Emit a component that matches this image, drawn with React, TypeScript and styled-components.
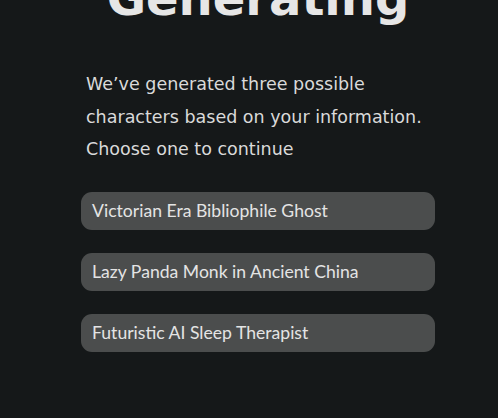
import React from "react";
import styled, { createGlobalStyle } from "styled-components";

const Global = createGlobalStyle`
  html, body { margin: 0; padding: 0; background: #151819; }
  body { overflow: hidden; }
`;

const Page = styled.main`
  width: 498px;
  height: 418px;
  box-sizing: border-box;
  padding-left: 81px;
  background: #151819;
  overflow: hidden;
`;

const Column = styled.div`
  width: 354px;
  display: flex;
  flex-direction: column;
`;

const Heading = styled.h1`
  margin: -30px 0 0;
  font-family: "DejaVu Sans", sans-serif;
  font-weight: 700;
  font-size: 48px;
  line-height: 56px;
  color: #e6e6e6;
  text-align: center;
`;

const Intro = styled.p`
  margin: 42px 0 0;
  padding: 0 5px;
  font-family: "DejaVu Sans", sans-serif;
  font-size: 17.5px;
  line-height: 32.5px;
  color: #dadada;
`;

const Options = styled.div`
  margin-top: 26px;
  display: flex;
  flex-direction: column;
  gap: 23px;
`;

const Option = styled.button`
  height: 38px;
  box-sizing: border-box;
  padding: 0 11px;
  border: none;
  border-radius: 11px;
  background: #4b4d4d;
  color: #e4e4e4;
  font-family: Lato, sans-serif;
  font-size: 17.6px;
  text-align: left;
  cursor: pointer;
`;

const characters = [
  "Victorian Era Bibliophile Ghost",
  "Lazy Panda Monk in Ancient China",
  "Futuristic AI Sleep Therapist",
];

export default function App() {
  return (
    <Page>
      <Global />
      <Column>
        <Heading>Generating</Heading>
        <Intro>
          We’ve generated three possible characters based on your information.
          Choose one to continue
        </Intro>
        <Options>
          {characters.map((c) => (
            <Option key={c}>{c}</Option>
          ))}
        </Options>
      </Column>
    </Page>
  );
}
